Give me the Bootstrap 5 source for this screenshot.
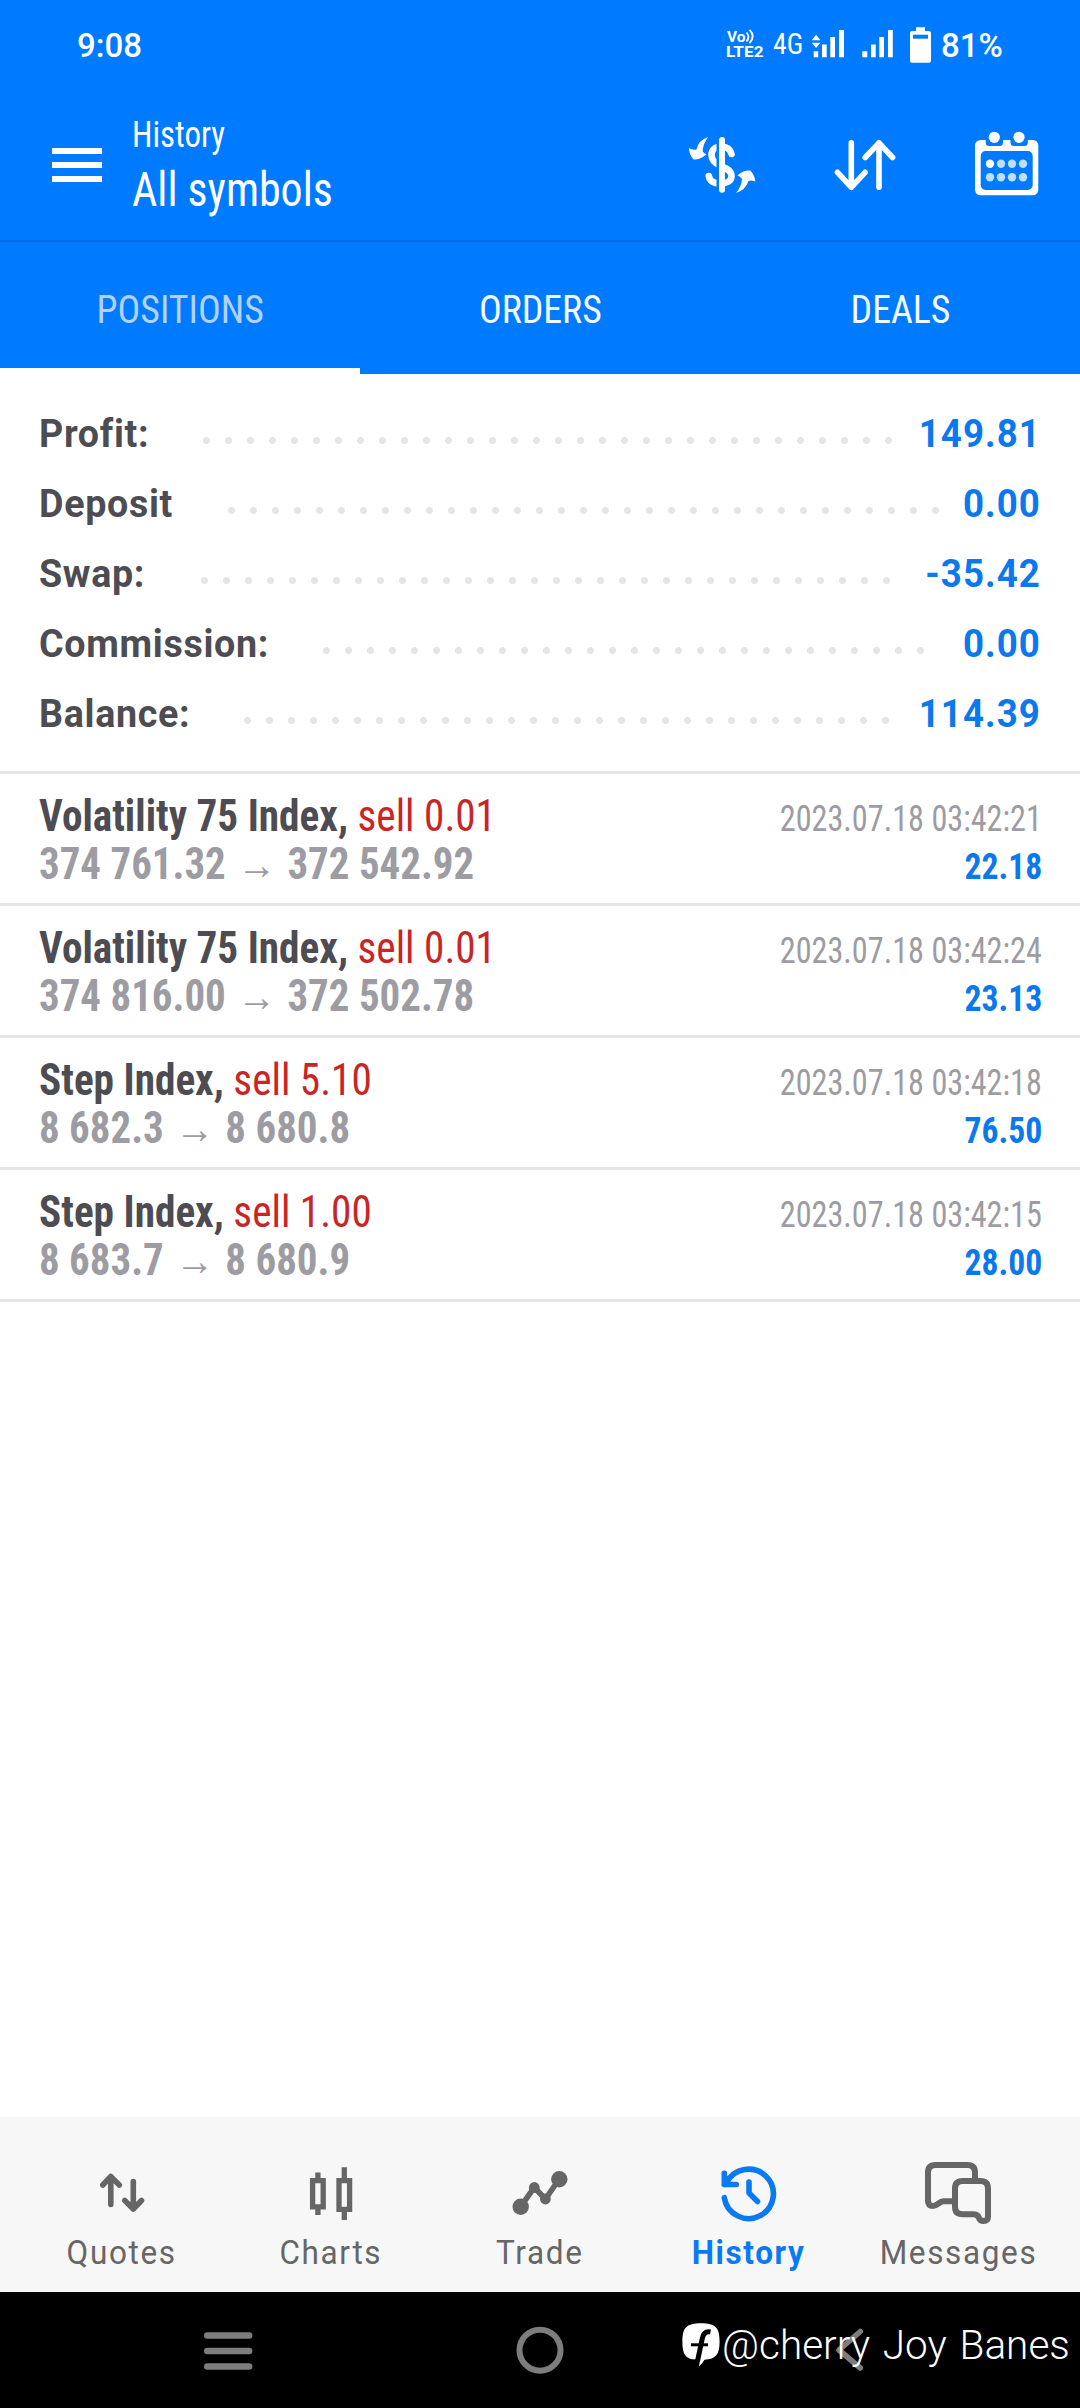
<!DOCTYPE html>
<html lang="en">
<head>
<meta charset="utf-8">
<meta name="viewport" content="width=device-width, initial-scale=1">
<title>History</title>
<link href="https://cdn.jsdelivr.net/npm/bootstrap@5.3.0/dist/css/bootstrap.min.css" rel="stylesheet">
<style>
  body { font-family: Roboto, "Liberation Sans", sans-serif; background: #fff; }
  .app { width: 1080px; height: 2408px; overflow: hidden; }
  svg { display: block; flex: none; overflow: visible; }
  .fit { display: inline-block; white-space: pre; transform: scaleX(var(--sx, 1)); transform-origin: left center; }
  .fit-end { transform-origin: right center; }
  .fit-mid { transform-origin: center; }
  .cond { font-stretch: 75%; }
  .top { background: #007aff; color: #fff; }

  .status { height: 90px; padding: 0 76px 0 77px; font-size: 34px; font-weight: 500; line-height: 40px; }
  .status .clock { --sx: .97; }
  .status .net { --sx: .93; font-size: 30px; font-weight: 400; width: 33px; margin: 0 6px 3px 8px; }
  .status .level { --sx: .97; width: 63px; margin-left: 11px; }

  .appbar { height: 150px; padding: 0 38px 0 52px; }
  .burger { width: 50px; gap: 8px; }
  .burger i { height: 6px; background: #fff; }
  .heading { margin-left: 30px; --sx: .915; }
  .heading .over { font-size: 36px; line-height: 50px; }
  .heading .main { font-size: 48px; line-height: 60px; }
  .tools { gap: 74px; }

  .tabs { border-top: 2px solid #006fe8; height: 134px; }
  .tabs a { height: 132px; padding-top: 10px; border-bottom: 6px solid transparent; color: #f4fbff; font-size: 39px; --sx: .97; text-decoration: none; }
  .tabs a.current { color: #b3d1f3; border-bottom-color: #fff; }

  .totals { padding: 25px 40px 22px 39px; border-bottom: 3px solid #e5e5e5; }
  .total { height: 70px; font-size: 39px; font-weight: 700; line-height: 70px; }
  .total .fit { --sx: .965; letter-spacing: .7px; color: #4d4c52; }
  .total .fit-end { --sx: .94; margin-right: -1px; color: #0b78ee; letter-spacing: 1.1px; }
  .leader { position: absolute; top: 38px; height: 7px; background: radial-gradient(circle at 3.5px 3.5px, #e5e5e5 3.1px, transparent 3.9px) 0 0 / 22px 7px repeat-x; }

  .deal { height: 132px; padding: 18px 38px 0 39px; border-bottom: 3px solid #e5e5e5; line-height: 48px; font-stretch: 75%; }
  .deal .line { height: 48px; }
  .deal .left { font-size: 44px; font-weight: 700; --sx: .937; color: #4d4c52; }
  .deal .side { font-weight: 400; color: #c82626; }
  .deal .price { color: #9c9ca2; --sx: .93; }
  .deal .arrow { font: 700 42px/1px "Liberation Sans", sans-serif; margin: 0 2px; }
  .deal .when { font-size: 36px; --sx: .895; color: #9c9ca2; }
  .deal .gain { font-size: 36px; font-weight: 700; --sx: .935; color: #0b78ee; }

  .bottombar { height: 174px; padding: 42px 17.5px 0; background: #f7f7f7; box-shadow: 0 -1px 2px #f4f4f4; color: #666; }
  .bottombar a { color: inherit; text-decoration: none; width: 209px; }
  .bottombar .fit { --sx: .955; font-size: 33px; line-height: 40px; letter-spacing: 1.7px; margin-top: 7px; }
  .bottombar .current { color: #0a7af2; font-weight: 700; }

  .sysbar { height: 116px; background: #000; gap: 262px; color: #7d7d7d; }
  .credit { right: 2px; top: 29px; color: #fff; }
  .credit .fit { --sx: .976; font-size: 41.5px; font-weight: 350; line-height: 48px; word-spacing: 3px; margin-left: 2px; }
</style>
</head>
<body>
<div class="app d-flex flex-column">
  <header class="top">
    <div class="status d-flex align-items-center">
      <span class="fit clock">9:08</span>
      <svg class="ms-auto" width="38" height="30" viewBox="725 30 38 30" fill="#fff" font-family="Roboto, sans-serif" font-weight="700">
        <text x="725" y="41.800" font-size="14" textLength="18.500" lengthAdjust="spacingAndGlyphs">Vo</text>
        <path d="M744.500 32.500q4 4.300 0 9M747.500 29.800q6.500 6.200 0 13.400" fill="none" stroke="#fff" stroke-width="1.800"/>
        <text x="724" y="57.300" font-size="15.500" textLength="37.500" lengthAdjust="spacingAndGlyphs">LTE2</text>
      </svg>
      <span class="fit cond net">4G</span>
      <svg width="81" height="36" viewBox="810 27 81 36" fill="#fff">
        <path d="M809.800 40.200h8.600l-4.300-5.400zM809.800 42.800h8.600l-4.300 5.200z"/>
        <path d="M811.700 51.300h4.500v6h-4.500zM820 44.500h4.700v12.800H820zM828.300 37h4.700v20.300h-4.700zM837 30h5v27.300h-5z"/>
        <path d="M860.300 51.300h5v6h-5zM869 44.500h4.700v12.800H869zM877.300 37h4.700v20.300h-4.700zM886 30h4.800v27.300H886z"/>
      </svg>
      <svg class="ms-3" width="21" height="38" viewBox="908 25 21 38">
        <path fill="#fff" d="M915 26.300h9V30h4q2 0 2 2v28q0 1.800-2 1.800h-17q-2 0-2-1.800V32q0-2 2-2h4z"/>
        <path fill="#007aff" d="M912 33.700h15v4h-15z"/>
      </svg>
      <span class="fit level">81%</span>
    </div>

    <div class="appbar d-flex align-items-center">
      <div class="burger d-flex flex-column"><i></i><i></i><i></i></div>
      <div class="heading d-flex flex-column align-items-start">
        <span class="fit cond over">History</span>
        <span class="fit cond main">All symbols</span>
      </div>
      <div class="tools d-flex align-items-center ms-auto">
        <svg width="74" height="66" viewBox="686 132 74 66">
          <path d="M731.500 154C730 148 726 146.500 721 146.500C714.500 146.500 711.500 150.500 711.500 155C711.500 161 716 164 721 166C728.500 169 731.500 171.500 731.500 176C731.500 181 727 183.500 721 183.500C713.500 183.500 709.500 180.500 708.800 176" fill="none" stroke="#fff" stroke-width="6.600" stroke-linecap="round"/>
          <path d="M718 138v54" stroke="#007aff" stroke-width="3"/>
          <path d="M722 140v49.700" stroke="#fff" stroke-width="6" stroke-linecap="round"/>
          <path fill="#fff" d="M708.200 137Q698.500 140 696.500 149.500Q692 150.500 689 148Q689 154.500 693.500 159.500Q700 160 706.500 154.300Q704 153.500 702.700 151.500Q703 143.500 708.200 137zM736 193Q741.500 186.500 742 179Q740 176 737.500 175.500Q743.500 170 750.500 170.700Q755 175.500 755.300 181.800Q752 179.500 748.500 181Q745.500 190 736 193z"/>
        </svg>
        <svg width="64" height="66" viewBox="834 132 64 66" fill="none" stroke="#fff" stroke-width="5.600" stroke-linecap="round" stroke-linejoin="round">
          <path d="M851.300 142.800v44.500M837.500 172.300l13.800 15 13.800-15M879 187.300v-44.500M865.200 157.500l13.800-14.700 13.600 14.700"/>
        </svg>
        <svg width="70" height="70" viewBox="972 130 70 70">
          <rect x="975" y="140" width="63.300" height="55.300" rx="5.500" fill="#fff"/>
          <path fill="#007aff" d="M985.700 139h17.300v3.500q0 3.500-3.500 3.500h-10.300q-3.500 0-3.500-3.500zM1010.500 139h17.300v3.500q0 3.500-3.500 3.500H1014q-3.500 0-3.500-3.500z"/>
          <rect x="980.700" y="151" width="52" height="39" rx="5" fill="#007aff"/>
          <g fill="#fff"><circle cx="994.300" cy="137.300" r="5.600"/><circle cx="1019" cy="137.300" r="5.600"/><circle cx="990" cy="163.700" r="4.200"/></g>
          <g fill="#bfdeff"><circle cx="1001" cy="163.700" r="4.200"/><circle cx="1012" cy="163.700" r="4.200"/><circle cx="1023" cy="163.700" r="4.200"/><circle cx="990" cy="177.300" r="4.200"/><circle cx="1001" cy="177.300" r="4.200"/><circle cx="1012" cy="177.300" r="4.200"/><circle cx="1023" cy="177.300" r="4.200"/></g>
        </svg>
      </div>
    </div>

    <nav class="tabs d-flex">
      <a class="current flex-fill w-100 d-flex align-items-center justify-content-center" href="#"><span class="fit fit-mid cond">POSITIONS</span></a>
      <a class="flex-fill w-100 d-flex align-items-center justify-content-center" href="#"><span class="fit fit-mid cond">ORDERS</span></a>
      <a class="flex-fill w-100 d-flex align-items-center justify-content-center" href="#"><span class="fit fit-mid cond">DEALS</span></a>
    </nav>
  </header>

  <section class="totals">
    <div class="total position-relative d-flex justify-content-between"><span class="fit">Profit:</span><span class="leader" style="left:164px;width:704px"></span><span class="fit fit-end">149.81</span></div>
    <div class="total position-relative d-flex justify-content-between"><span class="fit">Deposit</span><span class="leader" style="left:189px;width:726px"></span><span class="fit fit-end">0.00</span></div>
    <div class="total position-relative d-flex justify-content-between"><span class="fit">Swap:</span><span class="leader" style="left:162px;width:704px"></span><span class="fit fit-end">-35.42</span></div>
    <div class="total position-relative d-flex justify-content-between"><span class="fit">Commission:</span><span class="leader" style="left:284px;width:616px"></span><span class="fit fit-end">0.00</span></div>
    <div class="total position-relative d-flex justify-content-between"><span class="fit">Balance:</span><span class="leader" style="left:205px;width:660px"></span><span class="fit fit-end">114.39</span></div>
  </section>

  <main>
    <article class="deal">
      <div class="line d-flex justify-content-between align-items-baseline"><span class="fit left">Volatility 75 Index, <span class="side">sell 0.01</span></span><span class="fit fit-end when">2023.07.18 03:42:21</span></div>
      <div class="line d-flex justify-content-between align-items-baseline"><span class="fit left price">374 761.32 <span class="arrow">→</span> 372 542.92</span><span class="fit fit-end gain">22.18</span></div>
    </article>
    <article class="deal">
      <div class="line d-flex justify-content-between align-items-baseline"><span class="fit left">Volatility 75 Index, <span class="side">sell 0.01</span></span><span class="fit fit-end when">2023.07.18 03:42:24</span></div>
      <div class="line d-flex justify-content-between align-items-baseline"><span class="fit left price">374 816.00 <span class="arrow">→</span> 372 502.78</span><span class="fit fit-end gain">23.13</span></div>
    </article>
    <article class="deal">
      <div class="line d-flex justify-content-between align-items-baseline"><span class="fit left">Step Index, <span class="side">sell 5.10</span></span><span class="fit fit-end when">2023.07.18 03:42:18</span></div>
      <div class="line d-flex justify-content-between align-items-baseline"><span class="fit left price">8 682.3 <span class="arrow">→</span> 8 680.8</span><span class="fit fit-end gain">76.50</span></div>
    </article>
    <article class="deal">
      <div class="line d-flex justify-content-between align-items-baseline"><span class="fit left">Step Index, <span class="side">sell 1.00</span></span><span class="fit fit-end when">2023.07.18 03:42:15</span></div>
      <div class="line d-flex justify-content-between align-items-baseline"><span class="fit left price">8 683.7 <span class="arrow">→</span> 8 680.9</span><span class="fit fit-end gain">28.00</span></div>
    </article>
  </main>

  <nav class="bottombar d-flex mt-auto">
    <a class="d-flex flex-column align-items-center" href="#">
      <svg width="80" height="66" viewBox="82 2160 80 66" fill="none" stroke="currentColor" stroke-width="5.600" stroke-linecap="round" stroke-linejoin="round"><path d="M110.800 2204.500v-28M102.800 2185l8-8.500 8.500 8.500M133.300 2181.500v27.500M124.800 2200.500l8.500 8.500 8.200-8.500"/></svg>
      <span class="fit fit-mid">Quotes</span>
    </a>
    <a class="d-flex flex-column align-items-center" href="#">
      <svg width="80" height="66" viewBox="291 2160 80 66" fill="none" stroke="currentColor" stroke-width="5.300"><path d="M312.600 2180.600h10.600v26.200h-10.600zM317.900 2172.500v6M317.900 2209v6M339 2180.600h10.600v28.800H339zM344.300 2167.300v11M344.300 2211v9"/></svg>
      <span class="fit fit-mid">Charts</span>
    </a>
    <a class="d-flex flex-column align-items-center" href="#">
      <svg width="80" height="66" viewBox="500 2160 80 66" fill="currentColor"><path d="M520.700 2206.700L534.300 2187.500L545.400 2199L559.300 2179" fill="none" stroke="currentColor" stroke-width="5.600"/><circle cx="520.700" cy="2206.700" r="8.200"/><circle cx="534.300" cy="2187.500" r="5.400"/><circle cx="545.400" cy="2199" r="5.400"/><circle cx="559.300" cy="2179.300" r="8.200"/></svg>
      <span class="fit fit-mid">Trade</span>
    </a>
    <a class="current d-flex flex-column align-items-center" href="#">
      <svg width="80" height="66" viewBox="709 2160 80 66" fill="none" stroke="currentColor" stroke-width="5.600" stroke-linecap="round" stroke-linejoin="round"><path d="M724.300 2197.700A24.700 24.700 0 1 0 726.500 2183M724.300 2173.300v11.200h12M724.300 2184.500l5-6.500M749 2182v11l8.500 8.500"/></svg>
      <span class="fit fit-mid">History</span>
    </a>
    <a class="d-flex flex-column align-items-center" href="#">
      <svg width="80" height="66" viewBox="918 2160 80 66" fill="none" stroke="currentColor" stroke-width="6"><path d="M953 2201.300H943.500C939 2201.300 937.500 2206 933 2206Q928 2206 928 2200.500V2172.500Q928 2165 935.500 2165H967.500Q975 2165 975 2172.500V2180"/><path d="M962.500 2181H980.500Q988 2181 988 2188.500V2216.500Q988 2221 983.500 2221Q980 2221 978.800 2217.500Q977.500 2214.300 973 2214.300H962.500Q955 2214.300 955 2206.800V2188.500Q955 2181 962.500 2181Z"/></svg>
      <span class="fit fit-mid">Messages</span>
    </a>
  </nav>

  <footer class="sysbar position-relative d-flex align-items-center justify-content-center">
    <svg width="50" height="50" viewBox="203 2325.500 50 50" stroke="currentColor" stroke-width="6.400" stroke-linecap="round"><path d="M207.200 2336h42M207.200 2351.500h42M207.200 2367h42"/></svg>
    <svg width="50" height="50" viewBox="515.500 2325.500 50 50" fill="none" stroke="currentColor" stroke-width="6"><circle cx="540.500" cy="2350.700" r="20.500"/></svg>
    <svg width="50" height="50" viewBox="827 2325.500 50 50" fill="none" stroke="currentColor" stroke-width="5.600" stroke-linecap="round" stroke-linejoin="round"><path d="M860.300 2332L839 2350.500L860.300 2368.500"/></svg>
    <div class="credit position-absolute d-flex align-items-center">
      <svg width="38" height="44" viewBox="680 2328 38 44"><path fill="#fff" d="M699 2328.200C713.500 2328.200 717.600 2332.500 717.600 2346.500C717.600 2359.500 714 2364 702.500 2364.800Q700.500 2368.500 697 2371.500L698 2364.900C684 2364.800 680.400 2360.500 680.400 2346.500C680.400 2332.500 684.500 2328.200 699 2328.200z"/><path d="M708.500 2337Q701.800 2335.800 700.300 2343.500L695.500 2366" fill="none" stroke="#000" stroke-width="5"/><path d="M689 2349.800h17" stroke="#000" stroke-width="3"/></svg>
      <span class="fit">@cherry Joy Banes</span>
    </div>
  </footer>
</div>
<script src="https://cdn.jsdelivr.net/npm/bootstrap@5.3.0/dist/js/bootstrap.bundle.min.js"></script>
</body>
</html>
